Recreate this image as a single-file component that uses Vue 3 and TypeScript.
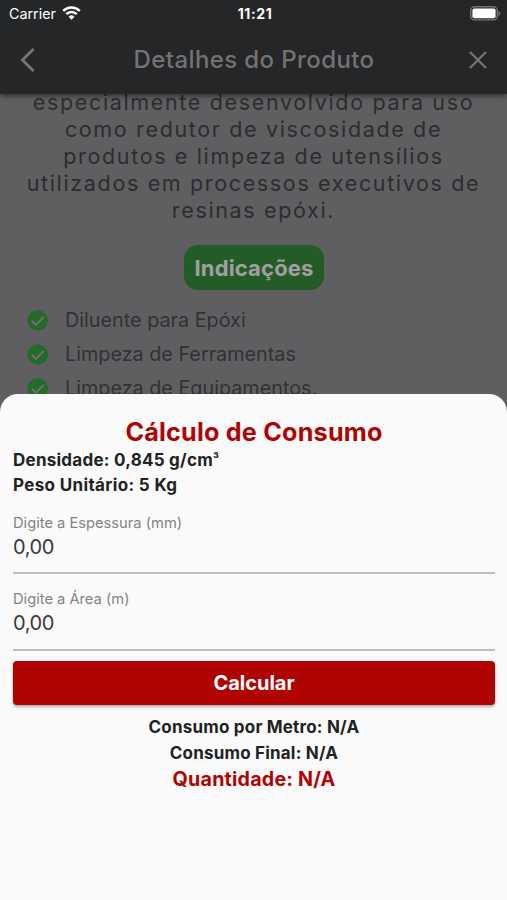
<script setup lang="ts">
import { ref } from 'vue'

const description: string[] = [
  'especialmente desenvolvido para uso',
  'como redutor de viscosidade de',
  'produtos e limpeza de utensílios',
  'utilizados em processos executivos de',
  'resinas epóxi.',
]
const indications: string[] = ['Diluente para Epóxi', 'Limpeza de Ferramentas', 'Limpeza de Equipamentos.']
const thickness = ref('0,00')
const area = ref('0,00')
</script>

<template>
  <div class="screen">
    <header class="top">
      <div class="status">
        <div class="carrier">
          <span>Carrier</span>
          <svg class="wifi" width="19" height="14" viewBox="0 0 19 14">
            <g fill="none" stroke="#fff" stroke-width="2.6">
              <path d="M1.2 4.9a11.7 11.7 0 0 1 16.6 0" />
              <path d="M4.3 8.2a7.4 7.4 0 0 1 10.4 0" />
            </g>
            <path d="M9.5 13.7 6.6 10.800a4.100 4.100 0 0 1 5.800 0Z" fill="#fff" />
          </svg>
        </div>
        <span class="time">11:21</span>
        <svg class="battery" width="31" height="15" viewBox="0 0 31 15">
          <rect x="0.7" y="0.7" width="26.6" height="13.2" rx="4" fill="none" stroke="#747475" stroke-width="1.4" />
          <rect x="2.4" y="2.4" width="23.2" height="9.8" rx="2" fill="#fff" />
          <path d="M28.5 5v4.800c1.200-.5 1.800-1.300 1.800-2.400S29.700 5.500 28.500 5Z" fill="#747475" />
        </svg>
      </div>
      <nav class="bar">
        <svg class="back" width="18" height="26" viewBox="0 0 18 26">
          <path d="M14.500 2 3.500 13 14.500 24" fill="none" stroke="#727375" stroke-width="3" />
        </svg>
        <h1>Detalhes do Produto</h1>
        <svg class="close" width="18" height="18" viewBox="0 0 18 18">
          <path d="M1 1 17 17M17 1 1 17" fill="none" stroke="#727375" stroke-width="2.300" />
        </svg>
      </nav>
    </header>

    <main class="content">
      <div class="description">
        <p v-for="line in description" :key="line">{{ line }}</p>
      </div>
      <div class="tag"><span>Indicações</span></div>
      <ul class="list">
        <li v-for="item in indications" :key="item">
          <svg width="22" height="22" viewBox="0 0 22 22">
            <circle cx="10.700" cy="11.500" r="10.300" fill="#256a29" />
            <path d="M4.700 11.800 8.900 15.800 16.700 8" fill="none" stroke="#6c716d" stroke-width="2" />
          </svg>
          <span>{{ item }}</span>
        </li>
      </ul>
    </main>

    <section class="sheet">
      <h2>Cálculo de Consumo</h2>
      <p class="spec">Densidade: 0,845 g/cm<span class="cube">³</span></p>
      <p class="spec unit">Peso Unitário: 5 Kg</p>
      <label class="field">
        <span class="label">Digite a Espessura (mm)</span>
        <input v-model="thickness" type="text" />
      </label>
      <label class="field">
        <span class="label">Digite a Área (m)</span>
        <input v-model="area" type="text" />
      </label>
      <button type="button">Calcular</button>
      <div class="results">
        <p>Consumo por Metro: N/A</p>
        <p>Consumo Final: N/A</p>
        <p class="quantity">Quantidade: N/A</p>
      </div>
    </section>
  </div>
</template>

<style>
body {
  margin: 0;
}
</style>

<style scoped>
* {
  box-sizing: border-box;
}
.screen {
  display: flex;
  flex-direction: column;
  width: 507px;
  height: 900px;
  overflow: hidden;
  background: #5f5f61;
  color: #2b2d2f;
  font-family: Inter, 'Liberation Sans', sans-serif;
}
h1,
h2,
p,
ul {
  margin: 0;
  padding: 0;
}
.top {
  position: relative;
  z-index: 1;
  flex: none;
  height: 94px;
  background: #252628;
  box-shadow: 0 2px 5px rgba(0, 0, 0, 0.5);
}
.status {
  display: grid;
  grid-template-columns: 1fr auto 1fr;
  align-items: center;
  height: 27px;
  padding: 0 6px 0 9px;
  color: #fff;
  font-size: 14.3px;
}
.carrier {
  display: flex;
  align-items: center;
  gap: 6px;
}
.wifi {
  margin-top: -2px;
}
.time {
  font-size: 14px;
  font-weight: 700;
  letter-spacing: 0.6px;
}
.battery {
  justify-self: end;
}
.bar {
  display: flex;
  align-items: center;
  justify-content: space-between;
  height: 65px;
  padding: 0 20px 0 19px;
  color: #727375;
}
h1 {
  padding-left: 2px;
  font-size: 24px;
  font-weight: 500;
  letter-spacing: 0.4px;
}
.content {
  flex: none;
  height: 300px;
  overflow: hidden;
}
.description {
  margin-top: -5px;
  font-size: 21.5px;
  line-height: 27px;
  letter-spacing: 1.65px;
  text-align: center;
  white-space: nowrap;
}
.tag {
  display: flex;
  align-items: center;
  justify-content: center;
  width: 140px;
  height: 45px;
  margin: 21px auto 0 184px;
  border-radius: 14px;
  background: #245c27;
  color: #a0a0a1;
  font-size: 22px;
  font-weight: 700;
  letter-spacing: 0.15px;
}
.list {
  margin-top: 13px;
  list-style: none;
}
li {
  display: flex;
  align-items: center;
  gap: 16px;
  height: 34px;
  padding-left: 27px;
  color: #303234;
  font-size: 19.8px;
}
.sheet {
  flex: 1;
  padding: 22px 12px 0 13px;
  border-radius: 18px 18px 0 0;
  background: #fafafa;
  color: #212224;
}
h2 {
  color: #b00303;
  font-size: 25.2px;
  font-weight: 700;
  line-height: 32px;
  letter-spacing: 0.2px;
  text-align: center;
}
.spec {
  font-size: 17px;
  font-weight: 700;
  line-height: 25px;
  letter-spacing: 0.25px;
}
.unit {
  letter-spacing: 0.35px;
}
.cube {
  font-size: 12.5px;
  line-height: 1;
  vertical-align: 3px;
}
.field {
  display: flex;
  flex-direction: column;
  height: 76px;
  padding-top: 16px;
  border-bottom: 2px solid #bebebe;
}
.field + .field {
  height: 77px;
}
.label {
  color: #838384;
  font-size: 14.7px;
  line-height: 18px;
}
input {
  width: 100%;
  height: 30px;
  padding: 0;
  border: 0;
  outline: 0;
  background: transparent;
  color: #38393b;
  font: 20px/30px Inter, 'Liberation Sans', sans-serif;
  letter-spacing: -0.4px;
}
button {
  display: block;
  width: 100%;
  height: 44px;
  margin-top: 10px;
  padding: 0;
  border: 0;
  border-radius: 4px;
  background: #b00303;
  box-shadow: 0 2px 3px rgba(0, 0, 0, 0.3);
  color: #fff;
  font: 700 20px/44px Inter, 'Liberation Sans', sans-serif;
}
.results {
  margin-top: 10px;
  font-size: 17px;
  font-weight: 700;
  line-height: 25.5px;
  letter-spacing: 0.2px;
  text-align: center;
}
.quantity {
  margin-top: 1px;
  color: #b00303;
  font-size: 19.7px;
}
</style>
